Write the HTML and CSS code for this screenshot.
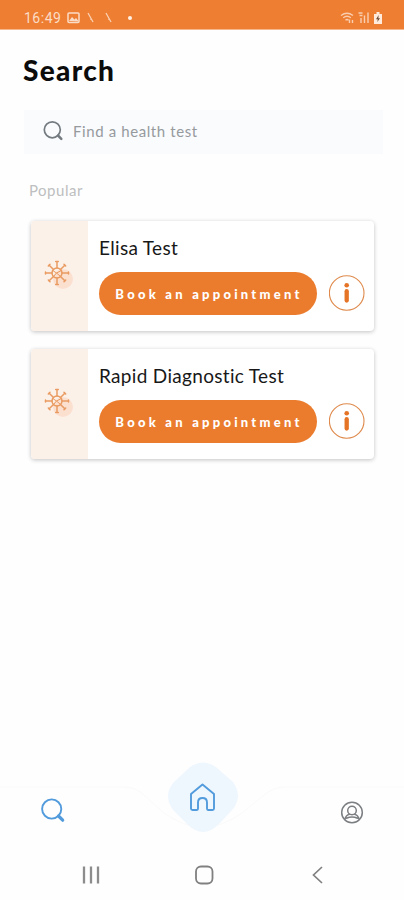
FILE: index.html
```html
<!DOCTYPE html>
<html lang="en">
<head>
<meta charset="utf-8">
<title>Search</title>
<link rel="stylesheet" href="styles.css">
</head>
<body>
<svg class="defs" width="0" height="0">
  <symbol id="virus" viewBox="0 0 32 32">
    <circle cx="20" cy="20" r="10" fill="#fbe0d0"/>
    <g fill="none" stroke="#e99b62" stroke-width="1.5" stroke-linecap="round">
      <circle cx="14" cy="14" r="5"/>
      <path d="M14 9V3M14 19v6M9 14H3M19 14h6M10.500 10.500L6.200 6.200M17.500 10.500l4.300-4.300M10.500 17.500l-4.300 4.300M17.500 17.500l4.300 4.300"/>
      <path d="M12.700 2.500h2.600M12.700 25.500h2.600M2.500 13v2M25.500 13v2M5.300 7L7 5.300M21 5.300L22.700 7M5.300 21L7 22.700M21 22.700l1.700-1.700"/>
      <path d="M10.500 12l3 2 4-2M11 17l2.500-3 3.500 3" stroke-width="1"/>
    </g>
  </symbol>
  <symbol id="info" viewBox="0 0 36 36">
    <circle cx="17.700" cy="18" r="17.300" fill="#fff" stroke="#df8a4c" stroke-width="1.100"/>
    <circle cx="17.700" cy="10.200" r="2.300" fill="#e57427"/>
    <path d="M17.700 16.200v9.300" stroke="#e57427" stroke-width="4.300" stroke-linecap="round"/>
  </symbol>
</svg>
<div class="phone">
  <header class="status">
    <span class="time">16:49</span>
    <svg class="notes" width="70" height="14" viewBox="0 0 70 14">
      <rect x="1" y="2" width="11" height="9.500" rx="1" fill="none" stroke="#fbdcc6" stroke-width="1.500"/>
      <path d="M2 10l3-4 2.500 2.500L9 7l3 3.500z" fill="#fbdcc6"/>
      <path d="M21 2l5 9M39 2l5 9M24 7v2M42 7v2" stroke="#fad0b2" stroke-width="1.300" fill="none"/>
      <circle cx="63" cy="7" r="2" fill="#fff0e6"/>
    </svg>
    <svg class="signals" width="44" height="14" viewBox="0 0 44 14">
      <g fill="none" stroke="#f9ceb0" stroke-width="1.400">
        <path d="M1 4.500q6-4.500 12 0M3.200 6.800q3.800-3 7.600 0M5.500 9.200q1.500-1.300 3 0M9.500 12V8.500M12.500 9v3"/>
        <path d="M18.500 2h4M19.500 4.500h3M21 12V7M24.500 12V4.500M28 12V1.500"/>
      </g>
      <path d="M34 3h2.500V1h3v2H42v10h-8z" fill="#ffeadb"/>
      <path d="M38.700 4L36 8.200h1.800L37.300 11 40 7.200h-1.700z" fill="#6b4a36"/>
    </svg>
  </header>
  <main class="content">
    <h1>Search</h1>
    <div class="search">
      <svg width="22" height="22" viewBox="0 0 22 22" fill="none" stroke="#747b80" stroke-linecap="round">
        <circle cx="10.300" cy="9.800" r="8" stroke-width="1.700"/><path d="M16 15.500l3.300 3.300" stroke-width="2.500"/>
      </svg>
      <span>Find a health test</span>
    </div>
    <h2>Popular</h2>
    <section class="card">
      <div class="strip"><svg width="32" height="32"><use href="#virus"/></svg></div>
      <div class="body">
        <h3>Elisa Test</h3>
        <div class="row"><button>Book an appointment</button><svg width="36" height="36"><use href="#info"/></svg></div>
      </div>
    </section>
    <section class="card">
      <div class="strip"><svg width="32" height="32"><use href="#virus"/></svg></div>
      <div class="body">
        <h3>Rapid Diagnostic Test</h3>
        <div class="row"><button>Book an appointment</button><svg width="36" height="36"><use href="#info"/></svg></div>
      </div>
    </section>
  </main>
  <nav class="tabs">
    <svg width="404" height="90" viewBox="0 0 404 90" fill="none" stroke-linecap="round" stroke-linejoin="round">
      <path d="M0 30h124q12 0 21 9l19 17q39 28 78 0l21-17q10-9 22-9h119" stroke="#fafafa"/>
      <path d="M189 11q14-11 28 0l16 14q10 14 0 27l-14 15q-16 16-32 0l-14-14q-10-14 0-27z" fill="#eff7fe"/>
      <g stroke="#529bdc" stroke-width="1.900">
        <circle cx="51.700" cy="52" r="9.600"/><path d="M58.500 59l4.200 4.200" stroke-width="3.200"/>
        <path d="M191 37L202.500 27.500 214 37V51.500q0 1.500-1.500 1.500H208q-1 0-1-1.500v-6q0-4.500-4.500-4.500T198 45.500v6q0 1.500-1 1.500h-4.500q-1.500 0-1.500-1.500z"/>
      </g>
      <g stroke="#7c7f82" stroke-width="1.500">
        <circle cx="352" cy="55.500" r="10.300"/><circle cx="352" cy="53.500" r="4.300"/>
        <path d="M344.800 62.500q1-4.500 4.700-5.300M359.200 62.500q-1-4.500-4.700-5.300M346.500 61.300q5.500-2.500 11 0"/>
      </g>
    </svg>
  </nav>
  <footer class="system">
    <svg width="20" height="20" viewBox="0 0 20 20" stroke="#8c8c8c" stroke-width="2.300"><path d="M3 1.500v17M10 1.500v17M17 1.500v17"/></svg>
    <svg width="20" height="20" viewBox="0 0 20 20" fill="none" stroke="#808080" stroke-width="1.800"><rect x="1" y="1.500" width="16.500" height="17" rx="5"/></svg>
    <svg width="20" height="20" viewBox="0 0 20 20" fill="none" stroke="#808080" stroke-width="1.700"><path d="M14 2L5.500 10l8.500 8"/></svg>
  </footer>
</div>
</body>
</html>
```

FILE: styles.css
```css
* { box-sizing: border-box; }
body { margin: 0; background: #fefefe; font-family: Lato, "Liberation Sans", sans-serif; }
svg { display: block; flex: none; }
.defs { position: absolute; }
.phone { display: flex; flex-direction: column; width: 404px; height: 900px; overflow: hidden; }
.status { display: flex; align-items: center; height: 30px; padding: 7px 20px 0 24px; background: #ee7e32; border-bottom: 1px solid #f6b78c; flex: none; }
.time { width: 43px; font: 14px Roboto, sans-serif; color: #fbdcc6; letter-spacing: .5px; white-space: nowrap; }
.signals { margin-left: auto; }
.content { flex: 1; padding: 23px 21px 0 23px; }
h1, h2, h3 { margin: 0; white-space: nowrap; }
h1 { font-size: 28px; line-height: 34px; font-weight: 900; letter-spacing: 1.300px; color: #0c0c0c; }
.search { display: flex; align-items: center; gap: 9px; height: 44px; margin: 23px 0 0 1px; padding: 0 18px 2px; background: #f9fbfd; color: #969a9d; font-size: 15px; letter-spacing: .6px; }
h2 { margin: 26px 0 21px 6px; font-size: 15px; line-height: 20px; font-weight: 400; letter-spacing: .5px; color: #bdbfc0; }
.card { display: flex; width: 343px; height: 110px; margin: 0 0 18px 8px; overflow: hidden; border-radius: 4px; background: #fff; box-shadow: 0 1px 4px rgba(0,0,0,.24); }
.strip { width: 57px; padding: 38px 0 0 12px; background: #fcf1e9; }
.body { padding: 15px 0 0 11px; }
h3 { font-size: 19px; line-height: 24px; font-weight: 400; color: #181818; letter-spacing: .32px; }
.row { display: flex; align-items: center; gap: 12px; margin-top: 12px; }
.row svg { margin-top: -2px; }
button { width: 218px; height: 43px; padding: 0 0 0 2px; border: 0; border-radius: 22px; background: #eb7c2e; color: #fff; font: 900 13px Lato, sans-serif; letter-spacing: 3.250px; white-space: nowrap; }
.tabs { height: 90px; flex: none; }
.system { display: flex; align-items: center; justify-content: space-between; height: 53px; padding: 2px 76px 0 81px; flex: none; }
```
